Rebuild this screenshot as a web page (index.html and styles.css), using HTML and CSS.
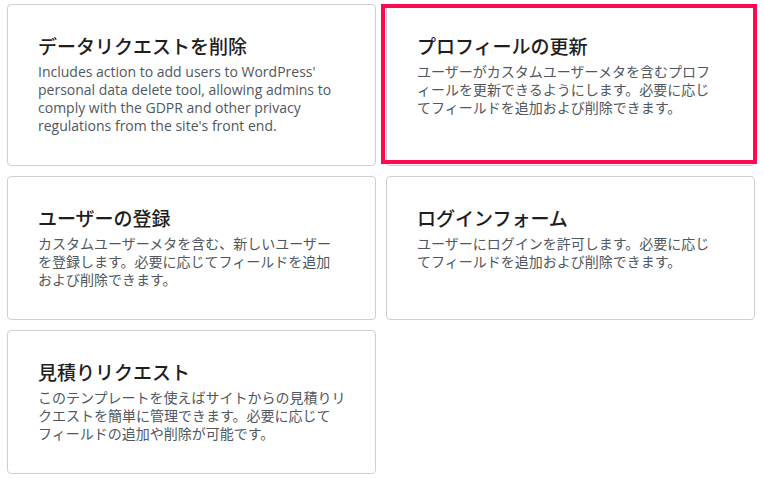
FILE: index.html
```html
<!DOCTYPE html>
<html lang="ja">
<head>
<meta charset="utf-8">
<title>Templates</title>
<link rel="stylesheet" href="styles.css">
</head>
<body>
<div class="grid">
  <div class="card">
    <h2 class="title">データリクエストを削除</h2>
    <p class="desc">Includes action to add users to WordPress' personal data delete tool, allowing admins to comply with the GDPR and other privacy regulations from the site's front end.</p>
  </div>
  <div class="card selected">
    <h2 class="title">プロフィールの更新</h2>
    <p class="desc">ユーザーがカスタムユーザーメタを含むプロフ<br>ィールを更新できるようにします。必要に応じ<br>てフィールドを追加および削除できます。</p>
    <div class="focus-ring"></div>
  </div>
  <div class="card">
    <h2 class="title">ユーザーの登録</h2>
    <p class="desc">カスタムユーザーメタを含む、新しいユーザー<br>を登録します。必要に応じてフィールドを追加<br>および削除できます。</p>
  </div>
  <div class="card">
    <h2 class="title">ログインフォーム</h2>
    <p class="desc">ユーザーにログインを許可します。必要に応じ<br>てフィールドを追加および削除できます。</p>
  </div>
  <div class="card">
    <h2 class="title">見積りリクエスト</h2>
    <p class="desc">このテンプレートを使えばサイトからの見積りリ<br>クエストを簡単に管理できます。必要に応じて<br>フィールドの追加や削除が可能です。</p>
  </div>
</div>
</body>
</html>
```
FILE: styles.css
```css
html, body {
  margin: 0;
  padding: 0;
  background: #ffffff;
}
body {
  font-family: "Open Sans", "Noto Sans CJK JP", sans-serif;
}
.grid {
  display: grid;
  grid-template-columns: 369px 369px;
  gap: 10px;
  padding: 4px 9px 0 7px;
}
.card {
  position: relative;
  border: 1px solid #cfcfcf;
  border-radius: 4px;
  padding: 30px 20px 30px 30px;
  background: #fff;
}
.title {
  margin: 0 0 4px 0;
  font-size: 19px;
  line-height: 24px;
  font-weight: 500;
  color: #1e1e1e;
}
.desc {
  margin: 0;
  font-size: 14px;
  line-height: 18px;
  color: #50575e;
}
.focus-ring {
  position: absolute;
  left: -6px;
  right: -3px;
  top: -1px;
  bottom: 1px;
  border: 4px solid #fb0a50;
  pointer-events: none;
}
```
